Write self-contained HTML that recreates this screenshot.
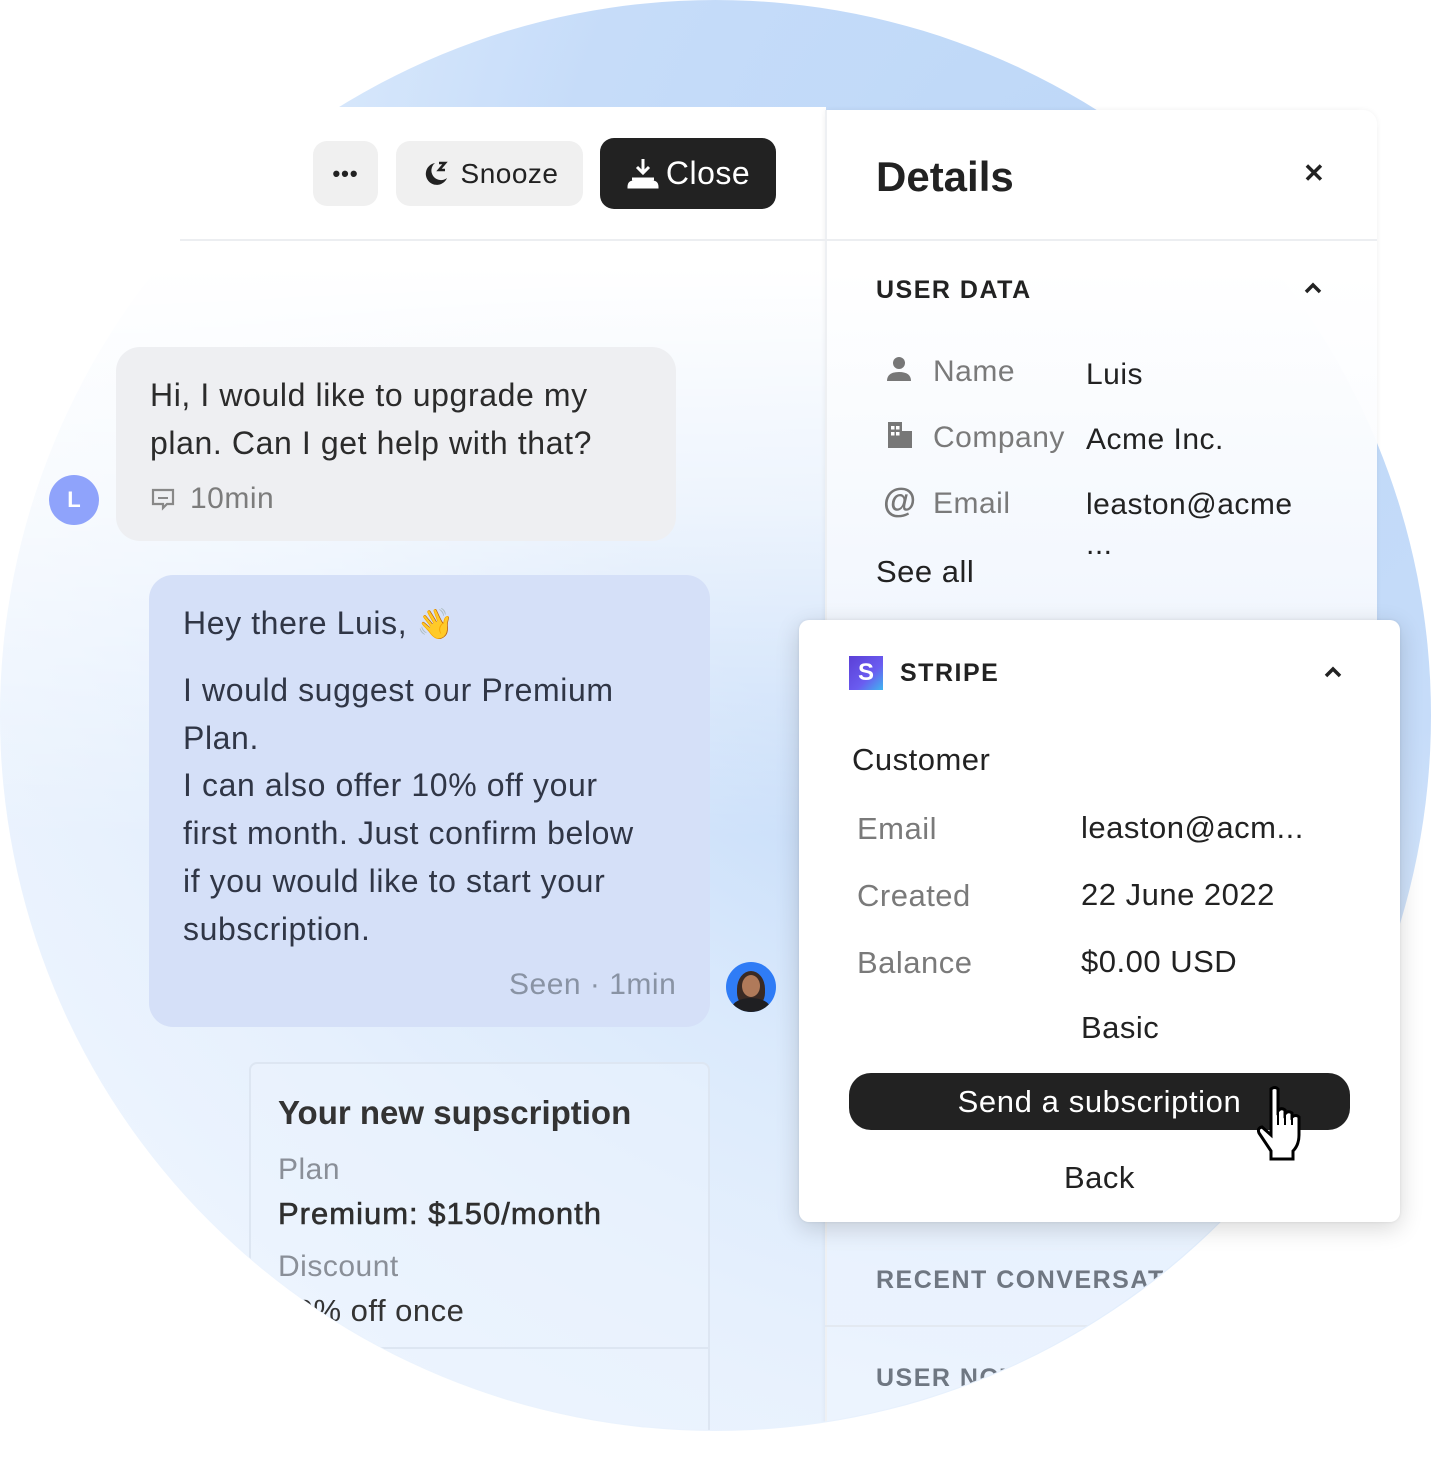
<!DOCTYPE html>
<html><head><meta charset="utf-8">
<style>
*{margin:0;padding:0;box-sizing:border-box}
body{width:1431px;height:1431px;background:#fff;position:relative;overflow:hidden;font-family:"Liberation Sans",sans-serif;color:#222}
.circle{position:absolute;left:0;top:0;width:1431px;height:1431px;border-radius:50%;background:radial-gradient(ellipse 1400px 1400px at 78% 18%,#bcd7f8 0%,#c6dcf9 40%,#dbeafc 62%,#e6f0fd 80%,#eef5fe 100%)}
.ui{position:absolute;left:0;top:0;width:1431px;height:1431px;clip-path:path('M0 0 H1431 V620 H0 Z M0 715 A715 715 0 0 1 1430 715 A715 715 0 0 1 0 715 Z')}
.abs{position:absolute}
.chatbg{left:0;top:107px;width:826px;height:1330px;background:linear-gradient(180deg,#fff 0%,#fff 12%,rgba(255,255,255,0.7) 30%,rgba(255,255,255,0) 55%)}
.detbg{left:825px;top:110px;width:552px;height:1330px;background:linear-gradient(180deg,#fff 0%,#fff 12%,rgba(246,249,254,0.9) 40%,rgba(240,246,254,0.5) 80%);border-left:2px solid #eef0f3;border-top-right-radius:14px;box-shadow:0 0 6px rgba(0,0,0,0.06)}
.hline{left:180px;top:239px;width:1197px;height:2px;background:#eceef1}
.btn{position:absolute;border-radius:14px;display:flex;align-items:center;justify-content:center;font-size:28px;letter-spacing:0.5px}
.t{position:absolute;white-space:nowrap;line-height:1}
.cap{font-size:25px;font-weight:bold;letter-spacing:1.5px}
.lab{color:#7a7a7a;font-size:30px;letter-spacing:0.5px}
.val{color:#222;font-size:30px;letter-spacing:0.5px}
.msg{font-size:32px;letter-spacing:0.6px;line-height:47.7px}
</style></head><body>
<div class="circle"></div>
<div class="ui">
<div class="abs chatbg"></div>
<div class="abs detbg"></div>
<div class="abs hline"></div>

<div class="btn" style="left:313px;top:141px;width:65px;height:65px;background:#f0f0f0;font-size:22px;font-weight:bold;letter-spacing:1px">•••</div>
<div class="btn" style="left:396px;top:141px;width:187px;height:65px;background:#f0f0f0;color:#222">
<svg width="30" height="30" viewBox="0 0 30 30" style="margin-right:10px"><path d="M14 4 A11 11 0 1 0 26 19 A9 9 0 0 1 14 4 Z" fill="#222"/><path d="M18 4 h6 l-6 7 h6" stroke="#222" stroke-width="2.5" fill="none"/></svg>Snooze</div>
<div class="btn" style="left:600px;top:138px;width:176px;height:71px;background:#222;color:#fff;font-size:32px">
<svg width="34" height="34" viewBox="0 0 34 34" style="margin-right:6px"><path d="M17 2 v14 M11 10 l6 6 l6 -6" stroke="#fff" stroke-width="3" fill="none"/><path d="M6 22 h22 M3 30 q0-5 5-5 h18 q5 0 5 5 Z" stroke="#fff" stroke-width="3" fill="#fff"/></svg>Close</div>

<div class="t" style="left:876px;top:156px;font-size:42px;font-weight:bold;color:#222">Details</div>
<div class="t" style="left:1303px;top:160px;font-size:26px;font-weight:bold">✕</div>

<div class="t cap" style="left:876px;top:278px">USER DATA</div>
<svg class="abs" style="left:1303px;top:281px" width="20" height="14" viewBox="0 0 20 14"><path d="M3 11 L10 4 L17 11" stroke="#222" stroke-width="3.5" fill="none"/></svg>

<svg class="abs" style="left:885px;top:355px" width="28" height="28" viewBox="0 0 28 28"><circle cx="14" cy="8" r="6" fill="#777"/><path d="M2 26 q0-9 12-9 q12 0 12 9 Z" fill="#777"/></svg>
<div class="t lab" style="left:933px;top:357px">Name</div>
<div class="t val" style="left:1086px;top:360px">Luis</div>
<svg class="abs" style="left:887px;top:421px" width="26" height="28" viewBox="0 0 26 28"><path d="M1 1 h14 v9 h10 v17 h-24 Z" fill="#777"/><rect x="4" y="5" width="3.5" height="3.5" fill="#fff"/><rect x="9" y="5" width="3.5" height="3.5" fill="#fff"/><rect x="4" y="11" width="3.5" height="3.5" fill="#fff"/><rect x="9" y="11" width="3.5" height="3.5" fill="#fff"/></svg>
<div class="t lab" style="left:933px;top:423px">Company</div>
<div class="t val" style="left:1086px;top:425px">Acme Inc.</div>
<div class="t" style="left:883px;top:484px;font-size:34px;font-weight:bold;color:#777">@</div>
<div class="t lab" style="left:933px;top:489px">Email</div>
<div class="t val" style="left:1086px;top:490px">leaston@acme</div>
<div class="t val" style="left:1086px;top:530px">...</div>
<div class="t" style="left:876px;top:556px;font-size:31px;color:#222;letter-spacing:0.5px">See all</div>

<div class="t cap" style="left:876px;top:1268px;color:#6f7782">RECENT CONVERSATIONS</div>
<div class="abs" style="left:825px;top:1325px;width:552px;height:2px;background:#e3e9f1"></div>
<div class="t cap" style="left:876px;top:1366px;color:#6f7782">USER NOTES</div>

<!-- chat -->
<div class="abs" style="left:49px;top:475px;width:50px;height:50px;border-radius:50%;background:#8fa3fb;color:#fff;font-weight:bold;font-size:22px;display:flex;align-items:center;justify-content:center">L</div>
<div class="abs" style="left:116px;top:347px;width:560px;height:194px;border-radius:24px;background:#eeeff2"></div>
<div class="t msg" style="left:150px;top:372px;color:#2b2b2b">Hi, I would like to upgrade my<br>plan. Can I get help with that?</div>
<svg class="abs" style="left:151px;top:488px" width="24" height="24" viewBox="0 0 24 24"><path d="M2 2 h20 v14 h-6 l-4 4 v-4 h-10 Z" stroke="#888" stroke-width="2.2" fill="none"/><path d="M7 10 h10" stroke="#888" stroke-width="2"/></svg>
<div class="t" style="left:190px;top:484px;font-size:30px;color:#7c7c7c;letter-spacing:0.5px">10min</div>

<div class="abs" style="left:149px;top:575px;width:561px;height:452px;border-radius:24px;background:#d5e0f8"></div>
<div class="t msg" style="left:183px;top:600px;color:#303646">Hey there Luis, <span style="font-size:30px">👋</span></div>
<div class="t msg" style="left:183px;top:667px;color:#303646">I would suggest our Premium<br>Plan.<br>I can also offer 10% off your<br>first month. Just confirm below<br>if you would like to start your<br>subscription.</div>
<div class="t" style="left:509px;top:970px;font-size:30px;color:#8993a4;letter-spacing:0.5px">Seen · 1min</div>
<div class="abs" style="left:726px;top:962px;width:50px;height:50px;border-radius:50%;background:#2f7cf6;overflow:hidden">
<div class="abs" style="left:11px;top:9px;width:28px;height:36px;border-radius:50% 50% 40% 40%;background:#3a2a24"></div>
<div class="abs" style="left:16px;top:13px;width:18px;height:22px;border-radius:50%;background:#b07a5a"></div>
<div class="abs" style="left:6px;top:36px;width:38px;height:20px;border-radius:50% 50% 0 0;background:#1f1f22"></div>
</div>

<div class="abs" style="left:249px;top:1062px;width:461px;height:400px;border:2px solid #dde6f2;border-radius:8px;background:rgba(236,243,253,0.5)"></div>
<div class="abs" style="left:249px;top:1347px;width:461px;height:2px;background:#dde6f2"></div>
<div class="t" style="left:278px;top:1096px;font-size:33px;font-weight:bold;color:#333">Your new supscription</div>
<div class="t" style="left:278px;top:1155px;font-size:30px;color:#8a8f98;letter-spacing:0.5px">Plan</div>
<div class="t" style="left:278px;top:1198px;font-size:31px;color:#2f2f2f;letter-spacing:1px;-webkit-text-stroke:0.6px #2f2f2f">Premium: $150/month</div>
<div class="t" style="left:278px;top:1252px;font-size:30px;color:#8a8f98;letter-spacing:0.5px">Discount</div>
<div class="t" style="left:278px;top:1295px;font-size:31px;color:#333;letter-spacing:0.5px">10% off once</div>
</div>

<!-- popover (not clipped) -->
<div class="abs" style="left:799px;top:620px;width:601px;height:602px;background:#fff;border-radius:10px;box-shadow:0 6px 24px rgba(0,0,0,0.16),0 0 3px rgba(0,0,0,0.08)"></div>
<div class="abs" style="left:849px;top:656px;width:34px;height:34px;background:linear-gradient(135deg,#5b3fd6,#6a5cf0 60%,#3fb6f0);color:#fff;font-weight:bold;font-size:24px;display:flex;align-items:center;justify-content:center">S</div>
<div class="t cap" style="left:900px;top:661px">STRIPE</div>
<svg class="abs" style="left:1323px;top:665px" width="20" height="14" viewBox="0 0 20 14"><path d="M3 11 L10 4 L17 11" stroke="#222" stroke-width="3.5" fill="none"/></svg>
<div class="t" style="left:852px;top:744px;font-size:31px;letter-spacing:0.5px">Customer</div>
<div class="t lab" style="left:857px;top:813px;font-size:31px">Email</div>
<div class="t val" style="left:1081px;top:812px;font-size:31px">leaston@acm...</div>
<div class="t lab" style="left:857px;top:880px;font-size:31px">Created</div>
<div class="t val" style="left:1081px;top:879px;font-size:31px">22 June 2022</div>
<div class="t lab" style="left:857px;top:947px;font-size:31px">Balance</div>
<div class="t val" style="left:1081px;top:946px;font-size:31px">$0.00 USD</div>
<div class="t val" style="left:1081px;top:1012px;font-size:31px">Basic</div>
<div class="abs" style="left:849px;top:1073px;width:501px;height:57px;border-radius:22px;background:#222;color:#fff;font-size:31px;letter-spacing:0.6px;display:flex;align-items:center;justify-content:center">Send a subscription</div>
<div class="t" style="left:1064px;top:1162px;font-size:31px;letter-spacing:0.5px">Back</div>
<svg class="abs" style="left:1254px;top:1086px" width="60" height="76" viewBox="0 0 60 76"><path d="M17 3 q4-3 7 0 v22 q3-4 7-1 v4 q3-4 7-1 v4 q4-3 7 0 v18 q0 10-6 16 v8 h-22 v-8 l-12-18 q-2-5 3-6 l9 8 Z" fill="#fff" stroke="#000" stroke-width="3"/><path d="M24 25 v14 M31 28 v11 M38 31 v8" stroke="#000" stroke-width="2"/></svg>
</body></html>
